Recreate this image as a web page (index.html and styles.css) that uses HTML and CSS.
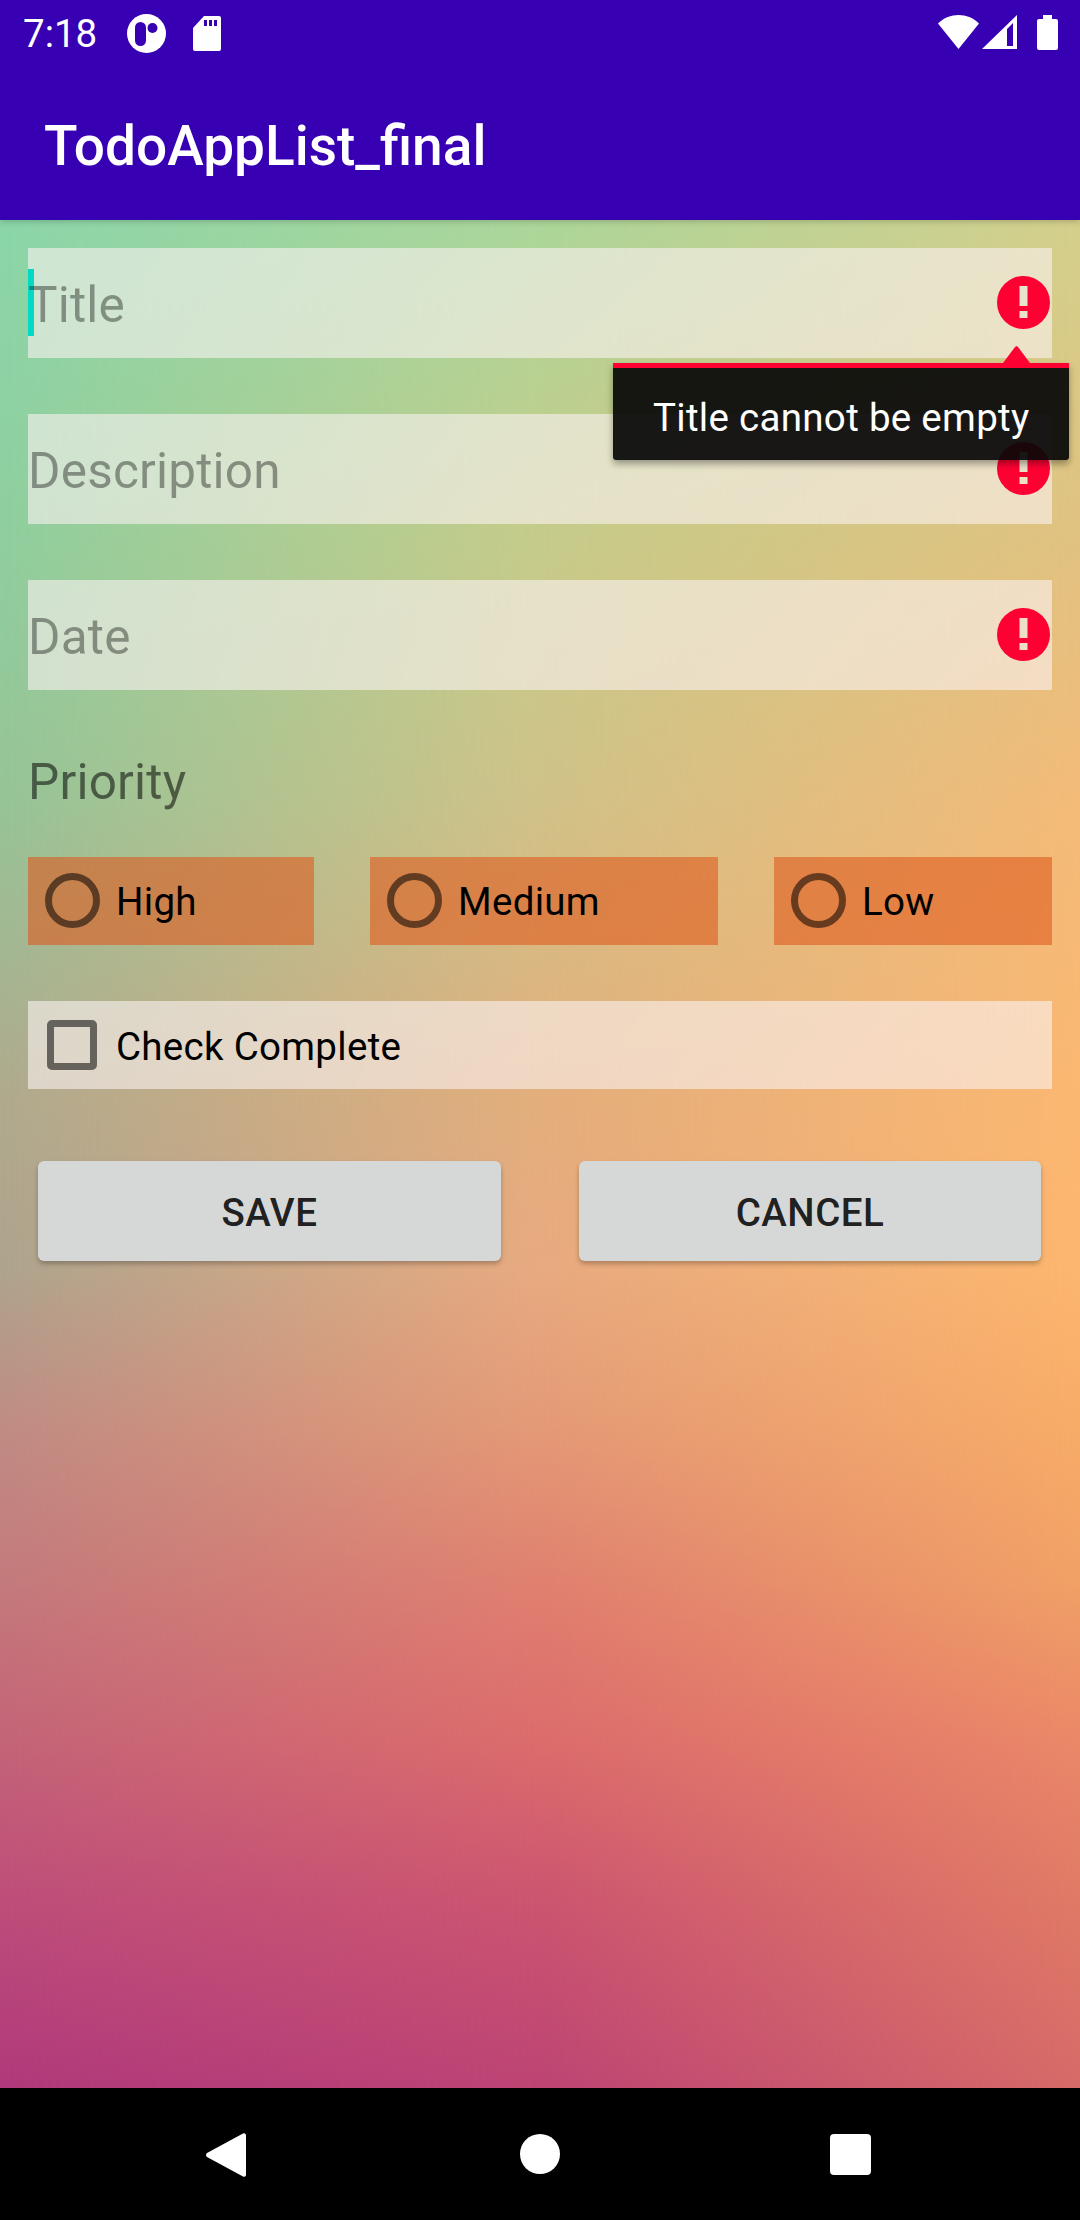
FILE: index.html
```html
<!DOCTYPE html>
<html lang="en">

<head>
    <meta charset="UTF-8">
    <meta name="viewport" content="width=device-width, initial-scale=1.0">
    <title>TodoAppList_final</title>
    <link rel="stylesheet" href="styles.css">
</head>

<body>

    <div class="phone">

        <!-- status bar + toolbar -->
        <header class="app-header">
            <div class="status-bar">
                <span class="status-time">7:18</span>
                <svg class="status-app" width="39" height="39" viewBox="0 0 39 39">
                    <circle cx="19.5" cy="19.5" r="19.5" fill="#fff" />
                    <rect x="8" y="8" width="11" height="24" rx="5.5" fill="#3700b3" />
                    <circle cx="25.5" cy="14" r="5" fill="#3700b3" />
                </svg>
                <svg class="status-sd" width="28" height="35" viewBox="0 0 28 35">
                    <path d="M11 0H26a2 2 0 0 1 2 2V33a2 2 0 0 1-2 2H2a2 2 0 0 1-2-2V12z" fill="#fff" />
                    <path d="M11 4h3v6h-3zM16 4h3v6h-3zM21 4h3v6h-3z" fill="#3700b3" />
                </svg>
                <div class="status-right">
                    <svg width="41" height="34" viewBox="0 0 41 34">
                        <path d="M0 8.5C11.500 -2.800 29.500 -2.800 41 8.500L20.500 34z" fill="#fff" />
                    </svg>
                    <svg width="35" height="34" viewBox="0 0 35 34">
                        <path d="M0 34L35 0V34zM25 31H31V8L25 14z" fill="#fff" fill-rule="evenodd" />
                    </svg>
                    <svg class="status-battery" width="21" height="35" viewBox="0 0 21 35">
                        <path d="M6 0H15V4H19a2 2 0 0 1 2 2V33a2 2 0 0 1-2 2H2a2 2 0 0 1-2-2V6a2 2 0 0 1 2-2H6z" fill="#fff" />
                    </svg>
                </div>
            </div>
            <div class="toolbar">TodoAppList_final</div>
        </header>

        <main class="screen">
            <form class="form">

                <div class="field">
                    <span class="cursor"></span>
                    <span class="hint">Title</span>
                    <svg class="error-icon" width="53" height="53" viewBox="0 0 53 53">
                        <circle cx="26.500" cy="26.500" r="26.500" fill="#ff0033" />
                        <path d="M22.500 10h8v20h-8zM22.500 35h8v7h-8z" fill="#e8e3cc" />
                    </svg>
                    <!-- error popup of the title field -->
                    <div class="error-popup">Title cannot be empty</div>
                </div>

                <div class="field">
                    <span class="hint">Description</span>
                    <svg class="error-icon" width="53" height="53" viewBox="0 0 53 53">
                        <circle cx="26.500" cy="26.500" r="26.500" fill="#ff0033" />
                        <path d="M22.500 10h8v20h-8zM22.500 35h8v7h-8z" fill="#ecdfc8" />
                    </svg>
                </div>

                <div class="field">
                    <span class="hint">Date</span>
                    <svg class="error-icon" width="53" height="53" viewBox="0 0 53 53">
                        <circle cx="26.500" cy="26.500" r="26.500" fill="#ff0033" />
                        <path d="M22.500 10h8v20h-8zM22.500 35h8v7h-8z" fill="#eedfc8" />
                    </svg>
                </div>

                <div class="section-label">Priority</div>

                <div class="radio-row">
                    <div class="radio"><span class="radio-ring"></span>High</div>
                    <div class="radio"><span class="radio-ring"></span>Medium</div>
                    <div class="radio"><span class="radio-ring"></span>Low</div>
                </div>

                <div class="check-row"><span class="check-box"></span><span class="check-label">Check Complete</span></div>

                <div class="button-row">
                    <div class="button">SAVE</div>
                    <div class="button">CANCEL</div>
                </div>

            </form>
        </main>

        <!-- navigation bar -->
        <nav class="nav-bar">
            <svg width="40" height="46" viewBox="0 0 40 46">
                <path d="M37 1.500a2 2 0 0 1 3 1.500V43a2 2 0 0 1-3 1.500L1 25a2.500 2.500 0 0 1 0-4z" fill="#fff" />
            </svg>
            <span class="nav-home"></span>
            <span class="nav-recent"></span>
        </nav>

    </div>

</body>

</html>
```

FILE: styles.css
```css
* {
    margin: 0;
    padding: 0;
    box-sizing: border-box;
}

body {
    font-family: Roboto, "Noto Sans", sans-serif;
    color: #000;
}

.phone {
    width: 1080px;
    height: 2220px;
    display: flex;
    flex-direction: column;
    overflow: hidden;
}

/* header */
.app-header {
    position: relative;
    z-index: 2;
    height: 220px;
    background-color: #3700b3;
    color: #fff;
    box-shadow: 0 2px 6px rgba(0, 0, 0, .18);
}

.status-bar {
    height: 66px;
    padding: 15px 22px 0 23px;
    display: flex;
    align-items: flex-start;
}

.status-time {
    font-size: 38.5px;
    line-height: 38px;
    width: 72px;
}

.status-app {
    margin: -1px 0 0 32px;
}

.status-sd {
    margin: 1px 0 0 27px;
}

.status-right {
    margin-left: auto;
    display: flex;
    gap: 3px;
}

.status-battery {
    margin-left: 17px;
}

.toolbar {
    height: 154px;
    padding: 48px 0 0 44px;
    font-size: 55px;
    line-height: 64px;
    font-weight: 500;
}

/* background: left colum is the base, centre and right fade in over it */
.screen {
    position: relative;
    flex: 1;
    background: linear-gradient(to bottom,
            #8bd6a9 0, #8fcf9f 300px, #96c498 580px, #b0aa8e 880px, #aea48e 1050px,
            #c08c84 1207px, #c47a7c 1364px, #c46478 1520px, #be4e7a 1680px, #b0397c 1868px);
}

.screen::before,
.screen::after {
    content: "";
    position: absolute;
    top: 0;
    left: 0;
    width: 100%;
    height: 100%;
}

.screen::before {
    background: linear-gradient(to bottom,
            #acd69a 0, #c5cc8a 300px, #d0c288 580px, #e3ae7c 880px, #e8aa80 1050px,
            #e49a76 1207px, #e08070 1364px, #dc6c6c 1520px, #cc5570 1680px, #bd4474 1868px);
    -webkit-mask-image: linear-gradient(to right, transparent 0, #000 50%);
    mask-image: linear-gradient(to right, transparent 0, #000 50%);
}

.screen::after {
    background: linear-gradient(to bottom,
            #d4cf8c 0, #e0c281 300px, #f3ba78 580px, #fbb772 880px, #fcb66e 1050px,
            #f7ac68 1207px, #f1a066 1364px, #ea8868 1520px, #e07a66 1680px, #d66a68 1868px);
    -webkit-mask-image: linear-gradient(to right, transparent 50%, #000 100%);
    mask-image: linear-gradient(to right, transparent 50%, #000 100%);
}

.form {
    position: relative;
    z-index: 1;
    padding: 28px 28px 0;
    display: flex;
    flex-direction: column;
}

/* text fields */
.field {
    position: relative;
    height: 110px;
    margin-bottom: 56px;
    display: flex;
    align-items: center;
    justify-content: space-between;
    padding: 0 2px 0 0;
    background-color: rgba(250, 242, 242, .6);
}

.hint {
    position: relative;
    padding-top: 4px;
    font-size: 49.5px;
    line-height: 58px;
    letter-spacing: .2px;
    color: rgba(0, 0, 0, .38);
}

.cursor {
    position: absolute;
    left: 0;
    top: 21px;
    width: 6px;
    height: 67px;
    background-color: #03dac5;
}

.error-icon {
    margin-top: -2px;
}

.error-popup {
    position: absolute;
    z-index: 3;
    top: 115px;
    right: -17px;
    width: 456px;
    height: 97px;
    padding: 27px 0 0 40px;
    font-size: 38.5px;
    line-height: 46px;
    letter-spacing: .3px;
    color: #fff;
    background-color: rgba(7, 7, 7, .93);
    border-top: 5px solid #ff0033;
    border-radius: 0 0 3px 3px;
    box-shadow: 0 4px 7px rgba(0, 0, 0, .35);
}

.error-popup::before {
    content: "";
    position: absolute;
    top: -22px;
    left: 390px;
    width: 27px;
    height: 17px;
    background-color: #ff0033;
    clip-path: polygon(0 100%, 12px 1px, 13.500px 0, 15px 1px, 100% 100%);
}

.section-label {
    margin: 7px 0 46px;
    font-size: 49.5px;
    line-height: 58px;
    letter-spacing: .2px;
    color: rgba(0, 0, 0, .54);
}

/* radio buttons */
.radio-row {
    display: grid;
    grid-template-columns: 286px 348px 278px;
    gap: 56px;
}

.radio {
    height: 88px;
    padding-left: 17px;
    display: flex;
    align-items: center;
    font-size: 38.5px;
    letter-spacing: .3px;
    background-color: rgba(222, 88, 28, .58);
}

.radio-ring {
    width: 55px;
    height: 55px;
    margin: -1px 16px 0 0;
    border: 7px solid rgba(0, 0, 0, .54);
    border-radius: 50%;
}

.check-row {
    height: 88px;
    margin-top: 56px;
    padding-left: 19px;
    display: flex;
    align-items: center;
    background-color: rgba(250, 242, 242, .6);
}

.check-box {
    width: 50px;
    height: 50px;
    margin-right: 19px;
    border: 7px solid rgba(0, 0, 0, .54);
    border-radius: 5px;
}

.check-label {
    padding-top: 2px;
    font-size: 38.5px;
    letter-spacing: .3px;
}

/* buttons */
.button-row {
    margin-top: 72px;
    padding: 0 11px 0 10px;
    display: grid;
    grid-template-columns: 463px 462px;
    gap: 78px;
}

.button {
    height: 100px;
    padding-top: 2px;
    display: flex;
    align-items: center;
    justify-content: center;
    font-size: 38.5px;
    font-weight: 500;
    letter-spacing: .5px;
    color: rgba(0, 0, 0, .87);
    background-color: #d6d7d7;
    border-radius: 6px;
    box-shadow: 0 3px 5px rgba(0, 0, 0, .25);
}

/* navigation bar */
.nav-bar {
    height: 132px;
    padding: 44px 209px 0 206px;
    display: flex;
    justify-content: space-between;
    align-items: flex-start;
    background-color: #000;
}

.nav-home {
    width: 40px;
    height: 40px;
    margin-top: 2px;
    margin-left: 4px;
    background-color: #fff;
    border-radius: 50%;
}

.nav-recent {
    width: 41px;
    height: 41px;
    margin-top: 2px;
    background-color: #fff;
    border-radius: 4px;
}
```
